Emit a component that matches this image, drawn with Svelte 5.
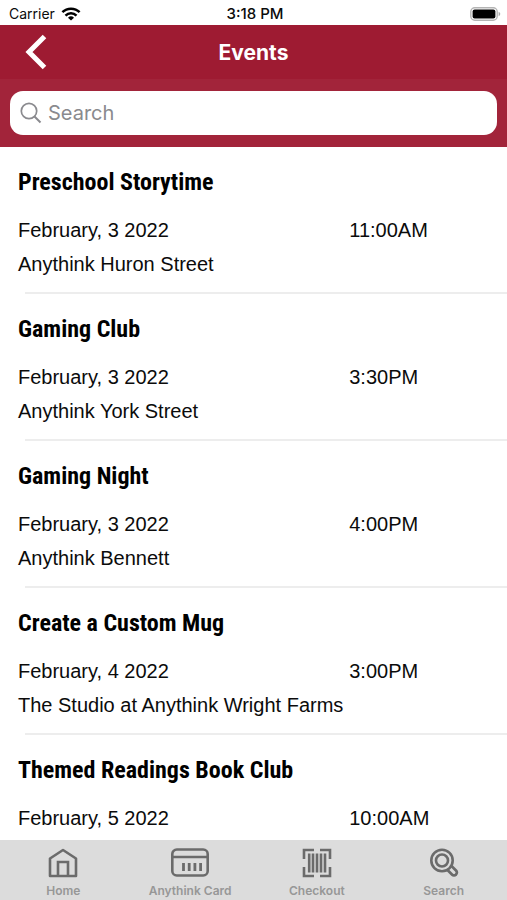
<script>
	let query = $state('');

	const events = [
		{ title: 'Preschool Storytime', date: 'February, 3 2022', time: '11:00AM', place: 'Anythink Huron Street' },
		{ title: 'Gaming Club', date: 'February, 3 2022', time: '3:30PM', place: 'Anythink York Street' },
		{ title: 'Gaming Night', date: 'February, 3 2022', time: '4:00PM', place: 'Anythink Bennett' },
		{ title: 'Create a Custom Mug', date: 'February, 4 2022', time: '3:00PM', place: 'The Studio at Anythink Wright Farms' },
		{ title: 'Themed Readings Book Club', date: 'February, 5 2022', time: '10:00AM' },
	];

	let shown = $derived(events.filter((e) => e.title.toLowerCase().includes(query.toLowerCase())));
</script>

<div class="screen">
	<div class="status">
		<div class="carrier">
			<span>Carrier</span>
			<svg width="20" height="14" viewBox="0 0 20 14" fill="none" stroke="#000" stroke-width="2.5">
				<path d="M1.4 5.2a12.2 12.2 0 0 1 17.2 0" />
				<path d="M4.5 8.6a7.8 7.8 0 0 1 11 0" />
				<path d="M10 13.6 7 10.7a4.3 4.3 0 0 1 6 0z" fill="#000" stroke="none" />
			</svg>
		</div>
		<span class="clock">3:18 PM</span>
		<div class="battery">
			<svg width="31" height="14" viewBox="0 0 31 14">
				<rect x="0.8" y="0.8" width="26.4" height="12.4" rx="4" fill="#fff" stroke="#b4b4b4" stroke-width="1.4" />
				<rect x="2.6" y="2.6" width="22.8" height="8.8" rx="2" fill="#000" />
				<path d="M28.6 4.8c2.2.8 2.2 3.6 0 4.4z" fill="#aaa" />
			</svg>
		</div>
	</div>

	<header>
		<button class="back" aria-label="Back">
			<svg width="22" height="36" viewBox="0 0 22 36" fill="none" stroke="#fff" stroke-width="5">
				<path d="M19.5 2.5 4 18l15.5 15.5" />
			</svg>
		</button>
		<h1>Events</h1>
	</header>

	<div class="search">
		<label>
			<svg width="22" height="22" viewBox="0 0 22 22" fill="none" stroke="#8a8a8e" stroke-width="1.7">
				<circle cx="9" cy="9" r="7.7" />
				<path d="m14.5 14.5 6 6" stroke-width="2" />
			</svg>
			<input type="text" placeholder="Search" aria-label="Search events" bind:value={query} />
		</label>
	</div>

	<main>
		{#each shown as event}
			<article>
				<h2>{event.title}</h2>
				<div class="when">
					<span>{event.date}</span>
					<span>{event.time}</span>
				</div>
				{#if event.place}
					<p>{event.place}</p>
				{/if}
			</article>
		{/each}
	</main>

	<nav>
		<a href="#home">
			<svg width="30" height="30" viewBox="0 0 30 30" fill="none" stroke="#6b6b6b" stroke-width="2.6">
				<path d="M2 10.5 15 2l13 8.5V28H2z" stroke-linejoin="round" />
				<path d="M10 28V14h10v14" />
			</svg>
			<span>Home</span>
		</a>
		<a href="#card">
			<svg width="38" height="30" viewBox="0 0 38 30" fill="none" stroke="#6b6b6b" stroke-width="2.6">
				<rect x="1.3" y="1.5" width="35.4" height="26" rx="4.5" />
				<path d="M1 9h36" />
				<path d="M12.5 15v8M18.2 15v8M23.9 15v8M29.6 15v8" stroke-width="2.8" />
			</svg>
			<span>Anythink Card</span>
		</a>
		<a href="#checkout">
			<svg width="30" height="30" viewBox="0 0 30 30" fill="none" stroke="#6b6b6b" stroke-width="2.6">
				<path d="M2 11V2h10M18 2h10v9M28 19v9H18M12 28H2v-9" />
				<path d="M7.2 5.5v19M11 5.5v19M15 5.5v19M19 5.5v19M23 5.5v19" />
			</svg>
			<span>Checkout</span>
		</a>
		<a href="#search">
			<svg width="30" height="30" viewBox="0 0 30 30" fill="none" stroke="#6b6b6b" stroke-width="2.6">
				<path d="m20 19.5 5 5" stroke-width="8.4" stroke-linecap="round" />
				<path d="m20 19.5 5 5" stroke="#dcdcdc" stroke-width="3" stroke-linecap="round" />
				<circle cx="13" cy="12.5" r="10.7" fill="#dcdcdc" />
				<circle cx="13" cy="12.5" r="6" />
			</svg>
			<span>Search</span>
		</a>
	</nav>
</div>

<style>
	:global(body) {
		margin: 0;
	}

	.screen {
		display: flex;
		flex-direction: column;
		height: 100vh;
		background: #fff;
		color: #0b0b0b;
		font-family: "Liberation Sans", Arial, sans-serif;
	}

	.status {
		display: grid;
		grid-template-columns: 1fr auto 1fr;
		align-items: center;
		flex: none;
		box-sizing: border-box;
		height: 25px;
		padding: 2px 6px 0 9px;
		font: 14px Inter, sans-serif;
	}

	.carrier {
		display: flex;
		align-items: center;
		gap: 6px;
	}

	.clock {
		font-size: 15px;
		font-weight: 500;
	}

	.battery {
		display: flex;
		justify-content: flex-end;
	}

	header {
		display: grid;
		grid-template-columns: 60px 1fr 60px;
		align-items: center;
		flex: none;
		height: 54px;
		background: #9e1b32;
	}

	.back {
		display: flex;
		padding: 0 0 0 25px;
		border: 0;
		background: none;
	}

	h1 {
		margin: 0;
		color: #fff;
		font: 700 21px Inter, sans-serif;
		text-align: center;
	}

	.search {
		flex: none;
		padding: 12px 10px;
		background: #a2243a;
	}

	label {
		display: flex;
		align-items: center;
		gap: 6px;
		height: 44px;
		padding: 0 10px;
		border-radius: 13px;
		background: #fff;
	}

	input {
		flex: 1;
		min-width: 0;
		padding: 0;
		border: 0;
		outline: 0;
		background: none;
		color: #000;
		font: 20px Inter, sans-serif;
	}

	input::placeholder {
		color: #8a8a8e;
	}

	main {
		flex: 1;
		min-height: 0;
		overflow-y: auto;
		scrollbar-width: none;
	}

	article {
		box-sizing: border-box;
		height: 147px;
		padding: 20px 0 0 18px;
		background: linear-gradient(#ededed, #ededed) 25px 100% / 100% 2px no-repeat;
		font-size: 20px;
		line-height: 34px;
	}

	h2 {
		margin: 0 0 16px;
		color: #000;
		font: 700 24px/30px "Roboto Condensed", "Liberation Sans Narrow", sans-serif;
	}

	.when {
		display: grid;
		grid-template-columns: 21fr 10fr;
	}

	p {
		margin: 0;
	}

	nav {
		display: flex;
		flex: none;
		box-sizing: border-box;
		height: 60px;
		padding-top: 8px;
		background: #dcdcdc;
	}

	nav a {
		display: flex;
		flex: 1;
		flex-direction: column;
		align-items: center;
		gap: 5px;
		color: #979797;
		font: 600 12px/16px Inter, sans-serif;
		text-decoration: none;
	}
</style>
